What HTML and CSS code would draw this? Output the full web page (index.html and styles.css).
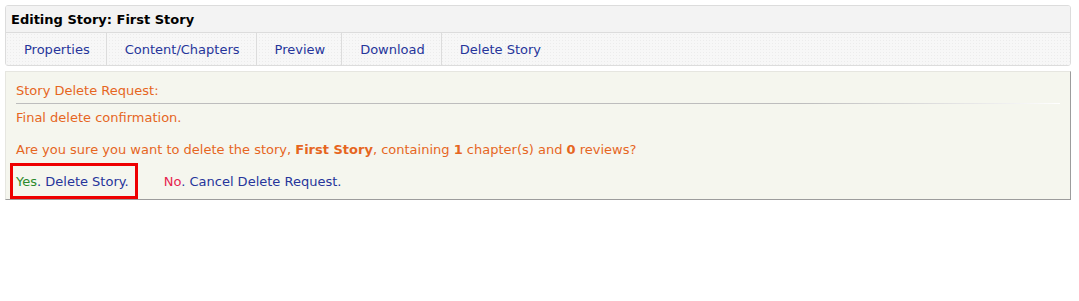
FILE: index.html
```html
<!DOCTYPE html>
<html lang="en">
<head>
  <meta charset="UTF-8" />
  <title>Editing Story: First Story</title>
  <link rel="stylesheet" href="styles.css">
</head>
<body>
  <div class="story-panel">
    <div class="panel-title">Editing Story: First Story</div>
    <ul class="tabs">
      <li><a href="#">Properties</a></li>
      <li><a href="#">Content/Chapters</a></li>
      <li><a href="#">Preview</a></li>
      <li><a href="#">Download</a></li>
      <li class="last"><a href="#">Delete Story</a></li>
    </ul>
  </div>

  <div class="delete-box">
    <div class="delete-head">Story Delete Request:</div>
    <div class="rule"></div>
    <p class="msg">Final delete confirmation.</p>
    <p class="msg question">Are you sure you want to delete the story, <b>First Story</b>, containing <b>1</b> chapter(s) and <b>0</b> reviews?</p>
    <div class="choices">
      <span class="choice highlight"><span class="yes">Yes</span><a href="#">. Delete Story.</a></span>
      <span class="choice"><span class="no">No</span><a href="#">. Cancel Delete Request.</a></span>
    </div>
  </div>
</body>
</html>
```

FILE: styles.css
```css
*, *::before, *::after {
  margin: 0;
  padding: 0;
  box-sizing: border-box;
}

body {
  font-family: 'DejaVu Sans', Verdana, sans-serif;
  font-size: 13px;
  line-height: 16px;
  margin: 5px;
  width: 1066px;
  background: #fff;
  color: #000;
}

a {
  text-decoration: none;
  color: #26359b;
}

.story-panel {
  border: 1px solid #dcdcdc;
  border-radius: 3px;
  overflow: hidden;
}

.panel-title {
  height: 27px;
  padding: 6px 0 0 5px;
  background: #f3f3f3;
  border-bottom: 1px solid #dcdcdc;
  font-weight: bold;
}

.tabs {
  list-style: none;
  display: flex;
  height: 32px;
  background-color: #f7f7f7;
  background-image: radial-gradient(#ececec 0.6px, transparent 0.8px);
  background-size: 3px 3px;
}

.tabs li {
  border-right: 1px solid #dcdcdc;
}

.tabs li.last {
  border-right: none;
}

.tabs a {
  display: block;
  padding: 9px 16px 0 18px;
  height: 32px;
}

.delete-box {
  margin-top: 5px;
  height: 129px;
  padding: 11px 10px 0 10px;
  background: #f5f6ee;
  border: 1px solid #e6e6e0;
  border-right-color: #9c9c9c;
  border-bottom-color: #9c9c9c;
  color: #e6661f;
}

.delete-head {
  height: 20px;
}

.rule {
  height: 1px;
  background: linear-gradient(to right, #bdbdbd 0%, #bdbdbd 75%, #f0f0f0 95%, #fff 100%);
}

.msg {
  margin-top: 6px;
}

.msg.question {
  margin-top: 16px;
}

.choices {
  margin-top: 16px;
  display: flex;
  gap: 35px;
}

.choice {
  position: relative;
}

.highlight::before {
  content: '';
  position: absolute;
  left: -6px;
  top: -11px;
  width: 128px;
  height: 36px;
  border: 3px solid #ee0000;
}

.yes {
  color: #2c8a2c;
}

.no {
  color: #e6254f;
}
```
